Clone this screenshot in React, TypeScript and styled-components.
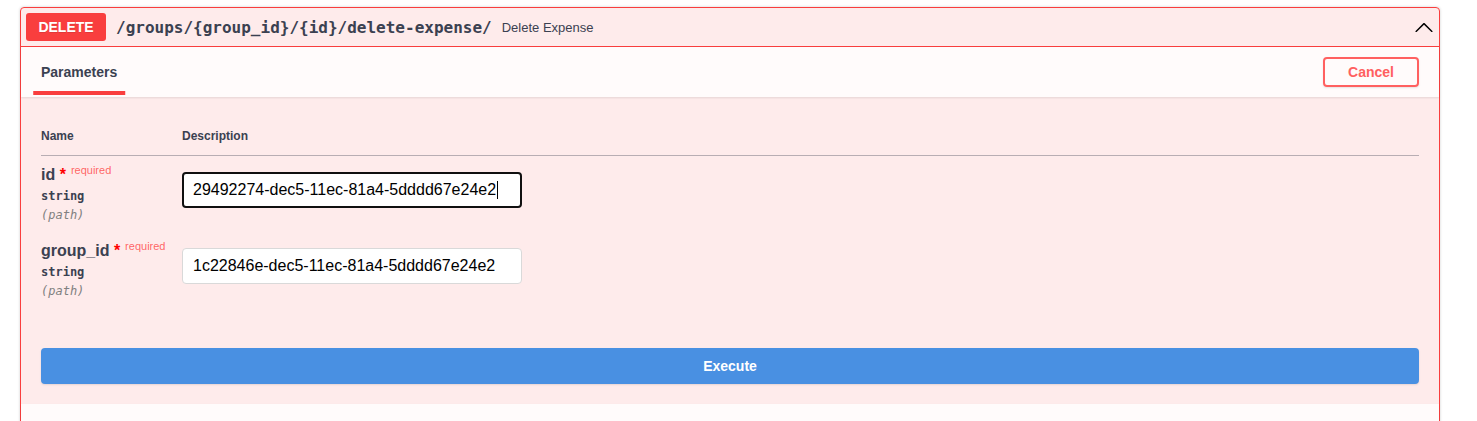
import React from "react";
import styled, { createGlobalStyle } from "styled-components";

const GlobalStyle = createGlobalStyle`
  html, body { margin: 0; padding: 0; background: #fff; }
  body { font-family: "Liberation Sans", Arial, sans-serif; color: #3b4151; }
  * { box-sizing: border-box; }
`;

const Page = styled.div`
  height: 100vh;
  overflow: hidden;
  padding: 7px 37px 0 20px;
`;

const Opblock = styled.div`
  border: 1px solid #f93e3e;
  border-radius: 4px;
  background: rgba(249, 62, 62, 0.1);
  box-shadow: 0 0 3px rgba(0, 0, 0, 0.19);
`;

const Summary = styled.div`
  display: flex;
  align-items: center;
  padding: 5px;
  border-bottom: 1px solid #f93e3e;
`;

const MethodBadge = styled.span`
  min-width: 80px;
  padding: 6px 0;
  border-radius: 3px;
  background: #f93e3e;
  color: #fff;
  font-family: "Liberation Sans", Arial, sans-serif;
  font-size: 14px;
  font-weight: 700;
  line-height: 16px;
  text-align: center;
  text-shadow: 0 1px 0 rgba(0, 0, 0, 0.1);
`;

const PathText = styled.span`
  padding: 0 10px;
  font-family: "DejaVu Sans Mono", monospace;
  font-size: 16px;
  font-weight: 600;
  color: #3b4151;
`;

const SummaryDesc = styled.span`
  flex: 1;
  font-size: 13px;
  color: #3b4151;
`;

const ArrowIcon = styled.svg`
  width: 20px;
  height: 20px;
  fill: #000;
  flex-shrink: 0;
`;

const SectionHeader = styled.div`
  display: flex;
  align-items: center;
  justify-content: space-between;
  min-height: 50px;
  padding: 8px 20px;
  background: rgba(255, 255, 255, 0.8);
  box-shadow: 0 1px 2px rgba(0, 0, 0, 0.1);
`;

const TabTitle = styled.h4`
  margin: 0;
  font-size: 14px;
  font-weight: 700;
  line-height: 16px;
  color: #3b4151;
`;

const TabLabel = styled.span<{ $active?: boolean }>`
  position: relative;
  &::after {
    content: "";
    display: ${(p) => (p.$active ? "block" : "none")};
    position: absolute;
    left: 50%;
    bottom: -15px;
    width: 120%;
    height: 4px;
    transform: translateX(-50%);
    background: #f93e3e;
  }
`;

const CancelButton = styled.button`
  padding: 5px 23px;
  border: 2px solid #ff6060;
  border-radius: 4px;
  background: transparent;
  color: #ff6060;
  font-family: "Liberation Sans", Arial, sans-serif;
  font-size: 14px;
  font-weight: 700;
  line-height: 16px;
  box-shadow: 0 1px 2px rgba(0, 0, 0, 0.1);
`;

const TableContainer = styled.div`
  padding: 20px;
`;

const Table = styled.table`
  width: 100%;
  border-collapse: collapse;
`;

const HeadCell = styled.th<{ $w?: number }>`
  width: ${(p) => (p.$w ? `${p.$w}px` : "auto")};
  padding: 12px 0;
  text-align: left;
  font-size: 12px;
  font-weight: 700;
  line-height: 14px;
  color: #3b4151;
  border-bottom: 1px solid rgba(59, 65, 81, 0.2);
`;

const Cell = styled.td`
  padding: 11px 0 10px;
  vertical-align: top;
`;

const ParamName = styled.div`
  height: 16px;
  font-size: 16px;
  font-weight: 700;
  line-height: 16px;
  color: #3b4151;
  white-space: nowrap;
`;

const RequiredStar = styled.span`
  color: red;
`;

const RequiredNote = styled.span`
  position: relative;
  top: -6px;
  padding: 5px;
  font-size: 11px;
  font-weight: 400;
  color: rgba(255, 0, 0, 0.6);
`;

const ParamType = styled.div`
  padding: 6px 0 5px;
  font-family: "DejaVu Sans Mono", monospace;
  font-size: 12px;
  font-weight: 600;
  line-height: 14px;
  color: #3b4151;
`;

const ParamIn = styled.div`
  font-family: "DejaVu Sans Mono", monospace;
  font-size: 12px;
  font-style: italic;
  font-weight: 300;
  line-height: 14px;
  color: gray;
`;

const TextInput = styled.input`
  display: block;
  width: 100%;
  max-width: 340px;
  margin: 5px 0;
  padding: 8px 10px;
  border: 1px solid #d9d9d9;
  border-radius: 4px;
  background: #fff;
  font-family: "Liberation Sans", Arial, sans-serif;
  font-size: 16px;
  line-height: 18px;
  color: #000;
  outline: none;
`;

const FocusedInput = styled.div`
  width: 340px;
  margin: 5px 0;
  padding: 7px 9px;
  border: 2px solid #101010;
  border-radius: 4px;
  background: #fff;
  font-size: 16px;
  line-height: 18px;
  color: #000;
  white-space: nowrap;
`;

const Caret = styled.span`
  display: inline-block;
  width: 1px;
  height: 18px;
  margin-left: 1px;
  vertical-align: top;
  background: #000;
`;

const ExecuteWrapper = styled.div`
  padding: 20px 20px 20px;
`;

const ExecuteButton = styled.button`
  display: block;
  width: 100%;
  padding: 8px 40px;
  border: 2px solid #4990e2;
  border-radius: 4px;
  background: #4990e2;
  color: #fff;
  font-family: "Liberation Sans", Arial, sans-serif;
  font-size: 14px;
  font-weight: 700;
  line-height: 16px;
  box-shadow: 0 1px 2px rgba(0, 0, 0, 0.1);
`;

type Param = { name: string; type: string; location: string; value: string; focused?: boolean };

const params: Param[] = [
  { name: "id", type: "string", location: "(path)", value: "29492274-dec5-11ec-81a4-5dddd67e24e2", focused: true },
  { name: "group_id", type: "string", location: "(path)", value: "1c22846e-dec5-11ec-81a4-5dddd67e24e2" },
];

export default function App() {
  return (
    <>
      <GlobalStyle />
      <Page>
        <Opblock>
          <Summary>
            <MethodBadge>DELETE</MethodBadge>
            <PathText>/groups/{"{group_id}"}/{"{id}"}/delete-expense/</PathText>
            <SummaryDesc>Delete Expense</SummaryDesc>
            <ArrowIcon viewBox="0 0 20 20" aria-hidden="true">
              <path d="M17.418 14.908c.272.268.709.268.979 0s.271-.701 0-.969l-7.908-7.83c-.27-.268-.707-.268-.979 0l-7.908 7.83c-.27.268-.27.701 0 .969.271.268.709.268.979 0L10 7.767l7.418 7.141z" />
            </ArrowIcon>
          </Summary>
          <SectionHeader>
            <TabTitle>
              <TabLabel $active>Parameters</TabLabel>
            </TabTitle>
            <CancelButton>Cancel</CancelButton>
          </SectionHeader>
          <TableContainer>
            <Table>
              <thead>
                <tr>
                  <HeadCell $w={141}>Name</HeadCell>
                  <HeadCell>Description</HeadCell>
                </tr>
              </thead>
              <tbody>
                {params.map((p) => (
                  <tr key={p.name}>
                    <Cell>
                      <ParamName>
                        {p.name}
                        <RequiredStar>&nbsp;*</RequiredStar>
                        <RequiredNote>required</RequiredNote>
                      </ParamName>
                      <ParamType>{p.type}</ParamType>
                      <ParamIn>{p.location}</ParamIn>
                    </Cell>
                    <Cell>
                      {p.focused ? (
                        <FocusedInput>
                          {p.value}
                          <Caret />
                        </FocusedInput>
                      ) : (
                        <TextInput type="text" defaultValue={p.value} placeholder={p.name} />
                      )}
                    </Cell>
                  </tr>
                ))}
              </tbody>
            </Table>
          </TableContainer>
          <ExecuteWrapper>
            <ExecuteButton>Execute</ExecuteButton>
          </ExecuteWrapper>
          <SectionHeader />
        </Opblock>
      </Page>
    </>
  );
}
